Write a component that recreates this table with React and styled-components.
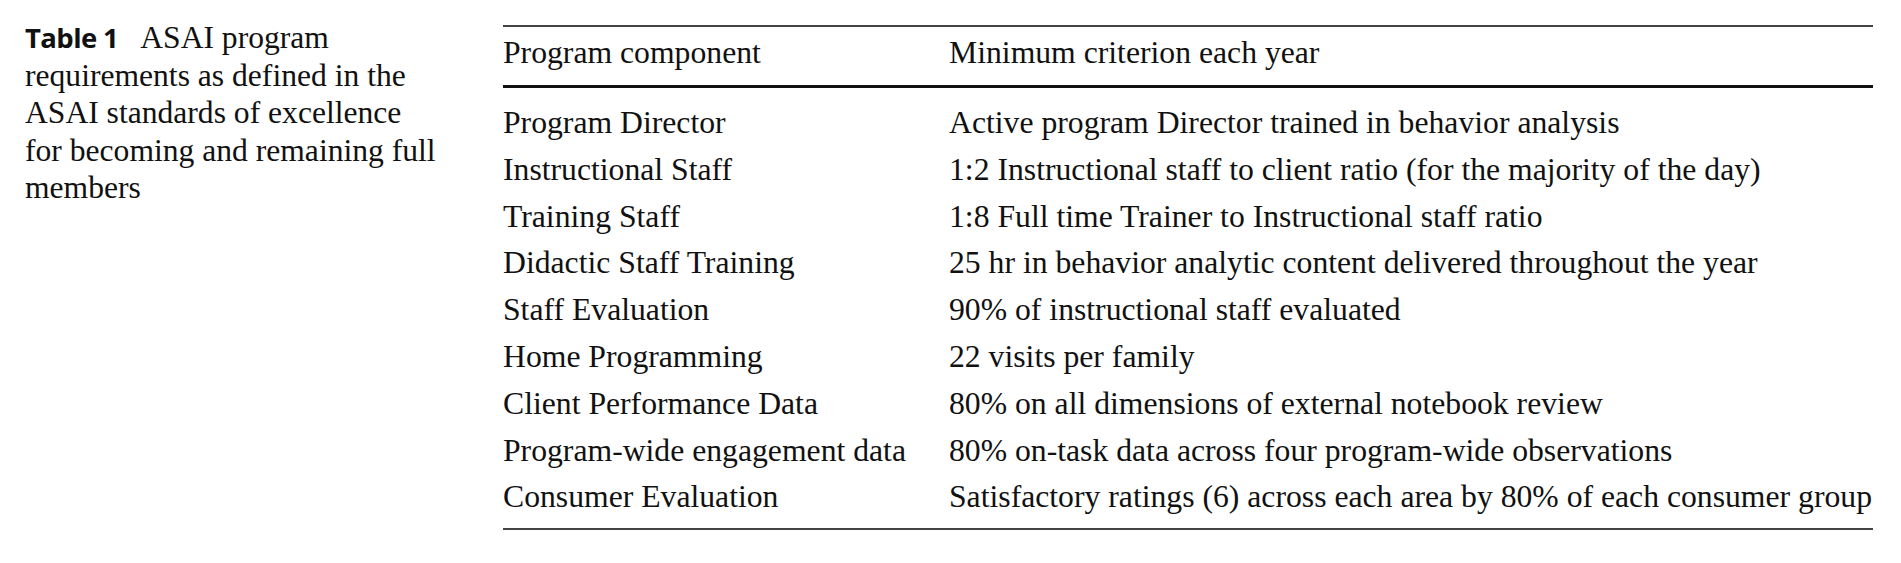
import styled, { createGlobalStyle } from "styled-components";

const GlobalStyle = createGlobalStyle`
  html, body {
    margin: 0;
    padding: 0;
    background: #fff;
  }
  body {
    font-family: "Liberation Serif", "Times New Roman", serif;
    color: #111;
  }
`;

const Page = styled.div`
  display: flex;
  align-items: flex-start;
  padding: 19px 28px 0 25px;
  width: 1901px;
  height: 563px;
  box-sizing: border-box;
`;

const Caption = styled.div`
  width: 478px;
  flex-shrink: 0;
  font-size: 31.6px;
  line-height: 37.5px;
  white-space: nowrap;
`;

const Label = styled.span`
  font-family: "Open Sans", "Noto Sans", sans-serif;
  font-weight: 700;
  font-size: 27.5px;
  letter-spacing: -0.6px;
  margin-right: 22px;
`;

const Table = styled.table`
  width: 1370px;
  margin-top: 6px;
  border-collapse: collapse;
  border-top: 2px solid #444;
  border-bottom: 2px solid #444;
  font-size: 31.7px;
  white-space: nowrap;
`;

const HeadCell = styled.th`
  text-align: left;
  font-weight: normal;
  padding: 2px 0 9px 0;
  line-height: 47px;
  border-bottom: 3px solid #111;
  width: ${(p) => p.$width || "auto"};
`;

const Body = styled.tbody`
  tr:first-child td {
    padding-top: 12px;
  }
  tr:last-child td {
    padding-bottom: 7px;
  }
`;

const Cell = styled.td`
  padding: 0;
  line-height: 46.8px;
  text-align: left;
`;

const rows = [
  ["Program Director", "Active program Director trained in behavior analysis"],
  ["Instructional Staff", "1:2 Instructional staff to client ratio (for the majority of the day)"],
  ["Training Staff", "1:8 Full time Trainer to Instructional staff ratio"],
  ["Didactic Staff Training", "25 hr in behavior analytic content delivered throughout the year"],
  ["Staff Evaluation", "90% of instructional staff evaluated"],
  ["Home Programming", "22 visits per family"],
  ["Client Performance Data", "80% on all dimensions of external notebook review"],
  ["Program-wide engagement data", "80% on-task data across four program-wide observations"],
  ["Consumer Evaluation", "Satisfactory ratings (6) across each area by 80% of each consumer group"],
];

export default function App() {
  return (
    <>
      <GlobalStyle />
      <Page>
        <Caption>
          <Label>Table 1</Label>ASAI program
          <br />
          requirements as defined in the
          <br />
          ASAI standards of excellence
          <br />
          for becoming and remaining full
          <br />
          members
        </Caption>
        <Table>
          <thead>
            <tr>
              <HeadCell $width="446px">Program component</HeadCell>
              <HeadCell>Minimum criterion each year</HeadCell>
            </tr>
          </thead>
          <Body>
            {rows.map(([component, criterion]) => (
              <tr key={component}>
                <Cell>{component}</Cell>
                <Cell>{criterion}</Cell>
              </tr>
            ))}
          </Body>
        </Table>
      </Page>
    </>
  );
}
